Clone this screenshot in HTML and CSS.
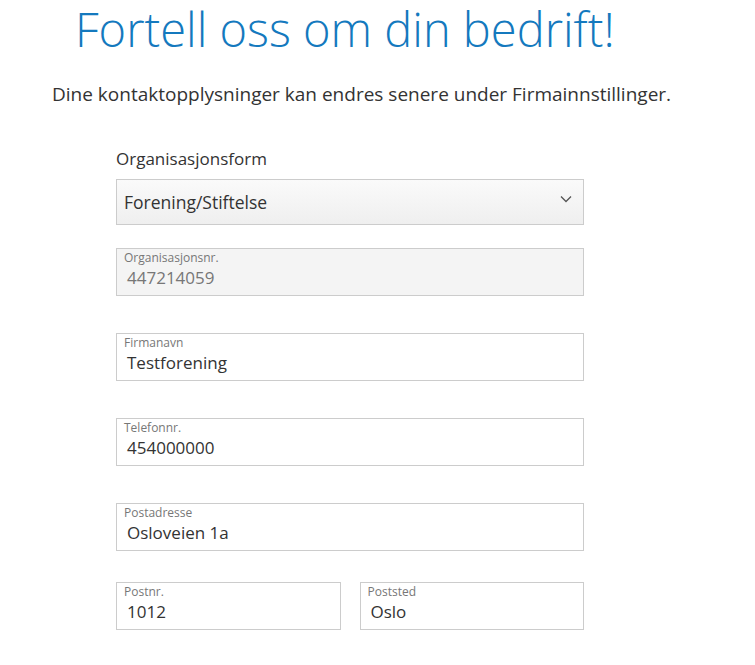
FILE: index.html
```html
<!DOCTYPE html>
<html lang="no">
<head>
    <meta charset="UTF-8">
    <title>Fortell oss om din bedrift</title>
    <link rel="stylesheet" href="styles.css">
</head>
<body>
<div class="page">
    <h1 class="title">Fortell oss om din bedrift!</h1>
    <p class="lead">Dine kontaktopplysninger kan endres senere under Firmainnstillinger.</p>

    <form class="company">
        <div class="row">
            <div class="select-label">Organisasjonsform</div>
            <div class="select">
                <span>Forening/Stiftelse</span>
                <svg class="chevron" width="12" height="8" viewBox="0 0 12 8"><path d="M1 1.5 6 6.5 11 1.5" fill="none" stroke="#555" stroke-width="1.3"/></svg>
            </div>
        </div>

        <div class="field disabled gap-s">
            <label>Organisasjonsnr.</label>
            <div class="value">447214059</div>
        </div>

        <div class="field">
            <label>Firmanavn</label>
            <div class="value">Testforening</div>
        </div>

        <div class="field">
            <label>Telefonnr.</label>
            <div class="value">454000000</div>
        </div>

        <div class="field">
            <label>Postadresse</label>
            <div class="value">Osloveien 1a</div>
        </div>

        <div class="pair">
            <div class="field">
                <label>Postnr.</label>
                <div class="value">1012</div>
            </div>
            <div class="field">
                <label>Poststed</label>
                <div class="value">Oslo</div>
            </div>
        </div>
    </form>
</div>
</body>
</html>
```

FILE: styles.css
```css
*{
    margin:0;
    padding:0;
    box-sizing: border-box;
}
body{
    font-family: "Open Sans", "Noto Sans", sans-serif;
    color:#333;
    background:#fff;
}
.page{
    width:755px;
}
.title{
    font-weight: 300;
    font-size:47px;
    line-height:58px;
    color:#1479be;
    margin-left:75px;
}
.lead{
    font-size:19px;
    line-height:26px;
    margin-left:52px;
    margin-top:23px;
    color:#333;
}
.company{
    width:468px;
    margin-left:116px;
    margin-top:41px;
}
.select-label{
    font-size:17px;
    line-height:22px;
    margin-bottom:9px;
}
.select{
    height:46px;
    border:1px solid #ccc;
    background: linear-gradient(#fafafa, #efefef);
    display:flex;
    align-items:center;
    justify-content: space-between;
    padding:0 11px 0 7px;
    font-size:17.5px;
}
.chevron{
    margin-top:-6px;
}
.field{
    height:48px;
    border:1px solid #ccc;
    padding:1px 7px 0;
    margin-top:37px;
    background:#fff;
}
.field.gap-s{
    margin-top:23px;
}
.field label{
    display:block;
    font-size:12px;
    line-height:16px;
    color:#777;
}
.field .value{
    font-size:17px;
    line-height:24px;
    padding-left:3px;
    color:#333;
}
.field.disabled{
    background:#f4f4f4;
}
.field.disabled .value{
    color:#777;
}
.pair{
    display:flex;
    gap:19px;
    margin-top:31px;
}
.pair .field{
    flex:1;
    margin-top:0;
}
```
